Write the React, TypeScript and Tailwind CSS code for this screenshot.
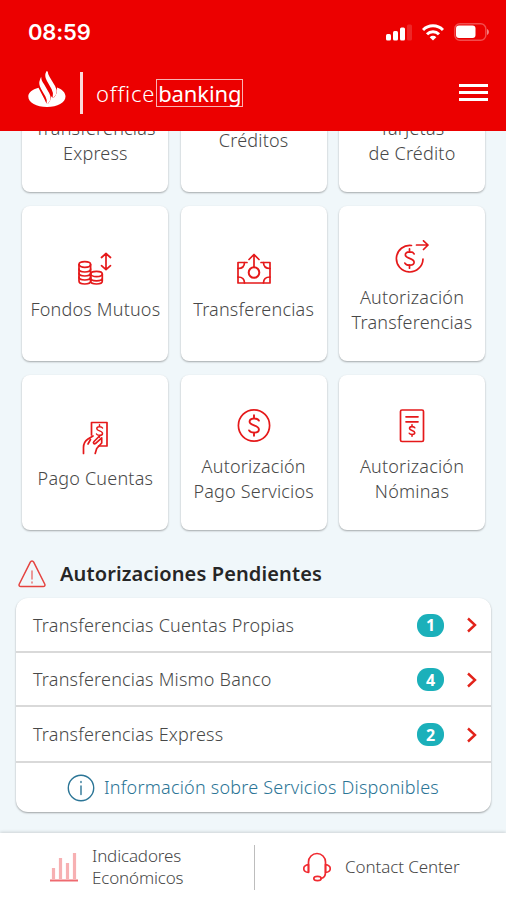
import type { ReactNode } from "react";

type Tile = { lines: string[]; icon: ReactNode };
type Pending = { label: string; count: number; row: string };

const stroke = {
  fill: "none",
  stroke: "currentColor",
  strokeWidth: 1.7,
  strokeLinecap: "round" as const,
  strokeLinejoin: "round" as const
};

function Dollar({ x, y, s = 1, w = 1.7 }: { x: number; y: number; s?: number; w?: number }) {
  return (
    <g transform={`translate(${x} ${y}) scale(${s})`} strokeWidth={w / s}>
      <path d="M5 -5C3.500 -8 -4.500 -8 -4.500 -3.800C-4.500 0.500 5 -0.800 5 4C5 8.300 -3.500 8 -5 5M0 -10.500V-7M0 7V10.500" />
    </g>
  );
}

function CoinsIcon() {
  return (
    <svg className="h-[34px] w-[34px]" viewBox="0 0 34 34" {...stroke}>
      <ellipse cx="6.800" cy="12.500" rx="5.800" ry="2.800" />
      <path d="M1 12.500v16.500c0 1.700 2.500 3 5.800 3s5.800-1.300 5.800-3V12.500" />
      <path d="M1 17c0 1.700 2.500 3 5.800 3s5.800-1.300 5.800-3M1 21c0 1.700 2.500 3 5.800 3s5.800-1.300 5.800-3M1 25c0 1.700 2.500 3 5.800 3s5.800-1.300 5.800-3" />
      <ellipse cx="18.500" cy="22" rx="5.800" ry="2.600" />
      <path d="M12.700 22v7c0 1.700 2.500 3 5.800 3s5.800-1.300 5.800-3v-7M12.700 26c0 1.700 2.500 2.800 5.800 2.800s5.800-1.100 5.800-2.800" />
      <path d="M28 2v15M23.500 5.500L28 1.500l4.500 4M23.500 13.700l4.500 4 4.500-4" />
    </svg>
  );
}

function BillIcon() {
  return (
    <svg className="h-[34px] w-[34px]" viewBox="0 0 34 34" {...stroke}>
      <path d="M10 10.500H1v20.500h32v-20.500h-9" />
      <path d="M1 16.500c4 0 6.500-2 6.500-6M33 16.500c-4 0-6.500-2-6.500-6M1 25c4 0 6.500 2 6.500 6M33 25c-4 0-6.500 2-6.500 6" />
      <circle cx="17" cy="20.500" r="5.300" strokeWidth="2" />
      <path d="M17 15V3M12 7.500l5-5 5 5" />
    </svg>
  );
}

function DollarArrowIcon() {
  return (
    <svg className="h-[34px] w-[34px]" viewBox="0 0 34 34" {...stroke}>
      <path d="M16.500 5.500A13.300 13.300 0 1 0 28 19" />
      <Dollar x={14.500} y={18.500} s={0.92} />
      <path d="M21.500 5H33M28.500 0.800L33 5l-4.500 4.500" />
    </svg>
  );
}

function HandBillIcon() {
  return (
    <svg className="h-[34px] w-[34px]" viewBox="0 0 34 34" {...stroke}>
      <path d="M13.500 14V1.500H29v23.500h-8.500" />
      <Dollar x={21.500} y={10} s={0.6} w={1.5} />
      <path d="M5.500 32.500v-6c0-4 1.500-6.500 4.500-8.500l5-3M10 23l2.500-4.500M21.500 15l-5.500 5.500c-1.300 1.300 0 3 1.700 1.800l6-5.500V22l-5 5.500-1.500 5" />
    </svg>
  );
}

function DollarCircleIcon() {
  return (
    <svg className="h-[34px] w-[34px]" viewBox="0 0 34 34" {...stroke}>
      <circle cx="17" cy="16.500" r="15.600" />
      <Dollar x={17} y={16.500} s={0.98} w={1.9} />
    </svg>
  );
}

function PayrollIcon() {
  return (
    <svg className="h-[34px] w-[34px]" viewBox="0 0 34 34" {...stroke}>
      <rect x="5.500" y="1" width="23" height="31.500" rx="1.500" />
      <path d="M11 7.800h12M11 12.800h12" />
      <Dollar x={17} y={21.500} s={0.55} w={1.6} />
    </svg>
  );
}

function CardIcon() {
  return (
    <svg className="h-[34px] w-[34px]" viewBox="0 0 34 34" {...stroke}>
      <rect x="1" y="6" width="32" height="22" rx="2" />
      <path d="M1 13h32" />
    </svg>
  );
}

const tiles: Tile[] = [
  { lines: ["Transferencias", "Express"], icon: <BillIcon /> },
  { lines: ["Créditos"], icon: <DollarCircleIcon /> },
  { lines: ["Tarjetas", "de Crédito"], icon: <CardIcon /> },
  { lines: ["Fondos Mutuos"], icon: <CoinsIcon /> },
  { lines: ["Transferencias"], icon: <BillIcon /> },
  { lines: ["Autorización", "Transferencias"], icon: <DollarArrowIcon /> },
  { lines: ["Pago Cuentas"], icon: <HandBillIcon /> },
  { lines: ["Autorización", "Pago Servicios"], icon: <DollarCircleIcon /> },
  { lines: ["Autorización", "Nóminas"], icon: <PayrollIcon /> }
];

const pending: Pending[] = [
  { label: "Transferencias Cuentas Propias", count: 1, row: "h-[55px]" },
  { label: "Transferencias Mismo Banco", count: 4, row: "h-[54px]" },
  { label: "Transferencias Express", count: 2, row: "h-[56px]" }
];

function StatusBar() {
  return (
    <div className="flex h-16 items-center justify-between pl-7 pr-[17px]">
      <span className="font-['Inter'] text-[22px] font-semibold tracking-[-0.2px]">08:59</span>
      <div className="flex items-center gap-[10px]">
        <svg className="h-[17px] w-[26px]" viewBox="0 0 26 17" fill="currentColor">
          <rect x="0" y="10" width="5" height="6.500" rx="1.500" />
          <rect x="7" y="7" width="5" height="9.500" rx="1.500" />
          <rect x="14" y="3.500" width="5" height="13" rx="1.500" />
          <rect x="21" y="0.500" width="5" height="16" rx="1.500" opacity="0.150" />
        </svg>
        <svg className="h-[17px] w-[22px]" viewBox="0 0 22 17" fill="none" stroke="currentColor" strokeWidth="3">
          <path d="M1 6a14 14 0 0 1 20 0M5 10.300a8.500 8.500 0 0 1 12 0" />
          <path d="M11 16.500l-3.300-3.300a4.700 4.700 0 0 1 6.600 0z" fill="currentColor" stroke="none" />
        </svg>
        <svg className="h-[18px] w-[35px]" viewBox="0 0 35 18" fill="none">
          <rect x="0.800" y="0.800" width="31" height="16.400" rx="5" stroke="currentColor" strokeWidth="1.400" opacity="0.300" />
          <rect x="2" y="2.500" width="19.500" height="12.500" rx="3" fill="currentColor" />
          <path d="M33 6c2.500 1 2.500 5 0 6z" fill="currentColor" opacity="0.500" />
        </svg>
      </div>
    </div>
  );
}

function Brand() {
  return (
    <div className="flex items-center">
      <svg className="mt-[-6px] h-[37px] w-[38px]" viewBox="0 0 38 37" fill="currentColor">
        <path d="M19 .5c-1.500 3-1.200 6 .5 9l4.800 8.300c1.300 2.400 1.800 4.600 1.200 7.700 2.800-2.800 3-6.300 1.200-9.500L21 6.500C19.700 4.300 19 2.800 19 .5z" stroke="currentColor" strokeWidth="1.500" />
        <path d="M12.800 8.500c-1.300 3-.8 6 .8 8.800l4.600 8c1.200 2.200 1.700 4 1.200 6.700 2.700-2.900 2.900-6.500 1.200-9.500L15 13c-1.200-2-1.900-2.700-2.200-4.500z" stroke="currentColor" strokeWidth="1.500" />
        <path d="M10.500 16.700C4.300 18.200.3 21.500.3 25.500.3 31.500 8.500 36 19 36s18.500-4.500 18.500-10.500c0-4-3.500-7.300-8.500-9 .4 4.200-.4 7-3 10-1.200 1-2.200-.2-2.900-1.500-.2 3-1.100 5.500-3.300 8-1.500 0-2.300-3-3.700-5.600z" />
      </svg>
      <div className="ml-[14px] h-[42px] w-[3px] bg-white/85" />
      <span className="ml-[13px] text-[22px] font-light leading-[28px] tracking-[0.8px]">office</span>
      <span className="ml-px border-[1.500px] border-white/70 px-px text-[22px] font-[450] leading-[26px] tracking-[-0.1px]">
        banking
      </span>
    </div>
  );
}

export default function App() {
  return (
    <main className="flex h-[900px] w-[506px] flex-col overflow-hidden bg-[#f0f7fa] font-['Noto_Sans',sans-serif] text-[#484848]">
      <header className="z-10 h-[131px] shrink-0 bg-[#ec0000] text-white">
        <StatusBar />
        <div className="flex h-[57px] items-center justify-between pl-7 pr-[18px]">
          <Brand />
          <div className="flex w-[29px] flex-col gap-1">
            <span className="h-[3px] bg-white" />
            <span className="h-[3px] bg-white" />
            <span className="h-[3px] bg-white" />
          </div>
        </div>
      </header>

      <section className="-mt-[94px] grid shrink-0 grid-cols-[146px_146px_146px] gap-x-[12.3px] gap-y-[14px] pl-[22.4px]">
        {tiles.map((tile) => (
          <button
            key={tile.lines.join(" ")}
            className="flex h-[155px] flex-col items-center justify-center rounded-lg bg-white pt-[7px] text-[18px] font-[360] leading-[24.5px] tracking-[0.2px] shadow-[0_1px_2px_rgba(0,0,0,0.32)]"
          >
            <span className="mb-[11px] text-[#e5191a]">{tile.icon}</span>
            {tile.lines.map((line) => (
              <span key={line} className="whitespace-nowrap">
                {line}
              </span>
            ))}
          </button>
        ))}
      </section>

      <section className="mt-[30px] shrink-0 px-4">
        <div className="flex h-[28px] items-center pl-[2px]">
          <svg className="h-[28px] w-[28px] text-[#e5433f]" viewBox="0 0 28 28" {...stroke} strokeWidth={1.5}>
            <path d="M12.300 2.200L1.300 24c-.7 1.400.1 2.600 1.500 2.600h22.400c1.400 0 2.200-1.200 1.500-2.600L15.700 2.200c-.8-1.500-2.600-1.500-3.400 0z" />
            <path d="M14 11v8M14 22v1" opacity="0.700" />
          </svg>
          <h2 className="ml-[14px] text-[20px] font-semibold tracking-[0.12px] text-[#262626]">
            Autorizaciones Pendientes
          </h2>
        </div>

        <div className="mt-[10px] h-[214px] w-[475px] overflow-hidden rounded-xl bg-white shadow-[0_1px_2px_rgba(0,0,0,0.35)]">
          {pending.map((item) => (
            <div
              key={item.label}
              className={`flex items-center border-b-2 border-[#d9d9d9] pl-[17px] pr-[14px] pt-px text-[18px] font-[360] ${item.row}`}
            >
              <span className="flex-1 whitespace-nowrap tracking-[0.2px]">{item.label}</span>
              <span className="flex h-[23px] w-[27px] items-center justify-center rounded-[11px] bg-[#1bb0ba] text-[16px] font-bold text-white">
                {item.count}
              </span>
              <svg className="ml-[23px] h-4 w-[10px] text-[#e2231a]" viewBox="0 0 10 16" fill="none" stroke="currentColor" strokeWidth="2.400">
                <path d="M1 1.500L8 8l-7 6.500" />
              </svg>
            </div>
          ))}
          <div className="flex h-[49px] items-center pl-[51px] text-[18px] font-[360] text-[#2b7596]">
            <svg className="h-[28px] w-[28px]" viewBox="0 0 28 28" {...stroke} strokeWidth={1.4}>
              <circle cx="14" cy="14" r="12.700" />
              <path d="M14 12v8.500M14 7.500v1" />
            </svg>
            <span className="ml-[9px] whitespace-nowrap tracking-[0.22px]">
              Información sobre Servicios Disponibles
            </span>
          </div>
        </div>
      </section>

      <footer className="mt-[21px] flex flex-1 items-center bg-white pt-px text-[17px] font-[360] leading-[22.5px] shadow-[0_-1px_3px_rgba(0,0,0,0.15)]">
        <div className="flex w-[254px] items-center pl-[50px]">
          <svg className="h-[30px] w-[28px]" viewBox="0 0 28 30" fill="none" stroke="#f7b0b2" strokeWidth="3.200">
            <path d="M3.500 27V16M10.500 27V6M17.500 27V11M24.500 27V1" />
            <path d="M0 28.500h28" stroke="#ee6a70" strokeWidth="2" />
          </svg>
          <div className="ml-[14px] tracking-[-0.15px]">
            Indicadores
            <br />
            Económicos
          </div>
        </div>
        <div className="h-[45px] w-px bg-[#bdbdbd]" />
        <div className="flex items-center pl-12">
          <svg className="h-[30px] w-[28px] text-[#f02a30]" viewBox="0 0 28 30" {...stroke}>
            <path d="M5.500 20V10a8.500 8.500 0 0 1 17 0v10c0 3.500-1.500 6-4.500 6.500" />
            <path d="M5.500 12.500C-.8 13.500-.8 20 5.500 20.500zM22.500 12.500c6.300 1 6.300 7.500 0 8z" />
            <ellipse cx="14.500" cy="26.500" rx="3.700" ry="2.200" />
          </svg>
          <span className="ml-[14px] whitespace-nowrap tracking-[-0.1px]">Contact Center</span>
        </div>
      </footer>
    </main>
  );
}
